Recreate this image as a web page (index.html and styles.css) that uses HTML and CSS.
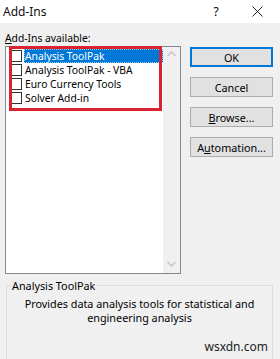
FILE: index.html
```html
<!DOCTYPE html>
<html lang="en">
  <head>
    <meta charset="UTF-8" />
    <title>Add-Ins</title>
    <link rel="stylesheet" href="styles.css">
  </head>
  <body>
    <div class="dialog">
      <div class="titlebar">
        <span class="title">Add-Ins</span>
        <span class="help">?</span>
        <span class="close">
          <svg width="11" height="11" viewBox="0 0 11 11"><path d="M0.5 0.5 L10.5 10.5 M10.5 0.5 L0.5 10.5" stroke="#222" stroke-width="1" fill="none"/></svg>
        </span>
      </div>

      <div class="content">
        <div class="list-label"><u>A</u>dd-Ins available:</div>
        <div class="main-row">
          <div class="listbox">
            <ul class="items">
              <li class="item selected"><span class="check"></span><span class="name">Analysis ToolPak</span></li>
              <li class="item"><span class="check"></span><span class="name">Analysis ToolPak - VBA</span></li>
              <li class="item"><span class="check"></span><span class="name">Euro Currency Tools</span></li>
              <li class="item"><span class="check"></span><span class="name">Solver Add-in</span></li>
            </ul>
            <div class="scrollbar">
              <svg width="9" height="6" viewBox="0 0 9 6"><path d="M0.5 5 L4.5 1 L8.5 5" stroke="#c4c4c4" stroke-width="1.3" fill="none"/></svg>
              <svg width="9" height="6" viewBox="0 0 9 6"><path d="M0.5 1 L4.5 5 L8.5 1" stroke="#c4c4c4" stroke-width="1.3" fill="none"/></svg>
            </div>
            <div class="highlight-box"></div>
          </div>
          <div class="buttons">
            <button class="btn default">OK</button>
            <button class="btn">Cancel</button>
            <button class="btn"><u>B</u>rowse...</button>
            <button class="btn">A<u>u</u>tomation...</button>
          </div>
        </div>

        <fieldset class="details">
          <legend>Analysis ToolPak</legend>
          <p>Provides data analysis tools for statistical and engineering analysis</p>
        </fieldset>
      </div>
      <div class="watermark">wsxdn.com</div>
    </div>
  </body>
</html>
```

FILE: styles.css
```css
* {
  margin: 0;
  padding: 0;
  box-sizing: border-box;
}

body {
  font-family: "Noto Sans", "DejaVu Sans", sans-serif;
  font-size: 10.3px;
  color: #000;
  background: #f0f0f0;
  width: 280px;
  height: 359px;
  overflow: hidden;
}

.dialog {
  position: relative;
  width: 280px;
  height: 359px;
  background: #f0f0f0;
}

.titlebar {
  height: 23px;
  background: #fff;
  display: flex;
  align-items: center;
  padding-left: 3px;
}

.title {
  font-size: 12px;
  flex: 1;
  color: #111;
}

.help {
  font-size: 12px;
  width: 20px;
  margin-right: 26px;
  text-align: center;
}

.close {
  width: 11px;
  margin-right: 17px;
  display: flex;
}

.content {
  padding: 7px 5px 0 5px;
}

.list-label {
  height: 16px;
  line-height: 16px;
}

.main-row {
  display: flex;
  align-items: flex-start;
}

.listbox {
  position: relative;
  width: 176px;
  height: 228px;
  background: #fff;
  border: 1px solid #82878f;
  display: flex;
}

.items {
  list-style: none;
  flex: 1;
  padding: 2px 0 0 5px;
}

.item {
  display: flex;
  align-items: center;
  height: 14px;
}

.check {
  width: 11px;
  height: 12px;
  border: 1px solid #333;
  background: #fff;
  margin-right: 2px;
  flex-shrink: 0;
}

.name {
  height: 14px;
  line-height: 14px;
  padding-left: 1px;
  white-space: nowrap;
}

.item.selected .name {
  flex: 1;
  background: #0078d7;
  color: #fff;
  outline: 1px dotted #9cc9ee;
  outline-offset: -1px;
}

.scrollbar {
  width: 17px;
  background: #f0f0f0;
  display: flex;
  flex-direction: column;
  justify-content: space-between;
  align-items: center;
  padding: 4px 0 6px;
}

.highlight-box {
  position: absolute;
  left: 3px;
  top: -1px;
  width: 153px;
  height: 65px;
  border: 3px solid #d9232e;
}

.buttons {
  display: flex;
  flex-direction: column;
  gap: 10px;
  margin-left: 9px;
  padding-top: 1px;
}

.btn {
  width: 83px;
  height: 20px;
  background: #e1e1e1;
  border: 1px solid #adadad;
  font-family: inherit;
  font-size: 10.8px;
  color: #000;
}

.btn.default {
  border: 2px solid #0078d7;
}

.details {
  margin: 4px 2px 0 1px;
  height: 83px;
  border: 1px solid #dcdcdc;
  padding: 0 4px;
}

.details legend {
  padding: 0 1px;
  margin-left: 0;
  font-size: 10.8px;
}

.details p {
  text-align: center;
  font-size: 10.8px;
  line-height: 14px;
  padding: 4px 6px 0;
}

.watermark {
  position: absolute;
  right: 12px;
  bottom: 4px;
  font-size: 12px;
  color: #222;
}
```
